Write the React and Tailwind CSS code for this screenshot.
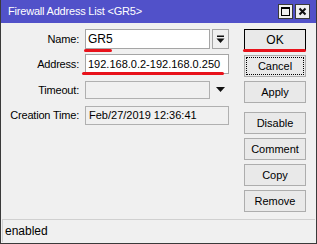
import React from 'react';

const font = { fontFamily: '"Liberation Sans", Arial, sans-serif' };

const Field = ({ label, children }) => (
  <div className="flex items-center h-[20px]">
    <div className="w-[80px] text-right pr-[2px] text-black tracking-[-0.2px]">{label}</div>
    <div className="ml-[4px] flex items-center">{children}</div>
  </div>
);

const Btn = ({ children, className = '' }) => (
  <div className={`h-[22px] w-[62px] flex items-center justify-center bg-[#e9e9e9] border border-[#adadad] text-black ${className}`}>
    {children}
  </div>
);

export default function App() {
  return (
    <div className="w-[317px] h-[244px] bg-[#f0f0f0] border-l border-r border-b border-[#3a3a3a] flex flex-col text-[11px] relative overflow-hidden" style={font}>
      {/* title bar */}
      <div className="h-[23px] bg-[#5151c9] flex items-center pl-[7px] pr-[6px]">
        <span className="text-white text-[11px] flex-1 tracking-[-0.2px]">Firewall Address List &lt;GR5&gt;</span>
        <div className="w-[15px] h-[15px] bg-[#f0f0f0] border border-[#3a3a3a] flex items-center justify-center">
          <div className="w-[9px] h-[9px] border border-black border-t-2" />
        </div>
        <div className="w-[15px] h-[15px] ml-[2px] bg-[#f0f0f0] border border-[#3a3a3a] flex items-center justify-center">
          <svg width="9" height="9" viewBox="0 0 9 9">
            <path d="M1.5 1.5 L7.5 7.5 M7.5 1.5 L1.5 7.5" stroke="#111" strokeWidth="2" />
          </svg>
        </div>
      </div>

      <div className="flex flex-1">
        {/* form */}
        <div className="flex flex-col pt-[6px] w-[243px]">
          <Field label="Name:">
            <div className="w-[125px] h-[20px] bg-white border border-[#a5a5a5] flex items-center pl-[2px] text-black text-[12px]">GR5</div>
            <div className="ml-[2px] w-[17px] h-[20px] bg-[#f0f0f0] border border-[#a5a5a5] flex items-center justify-center">
              <svg width="9" height="9" viewBox="0 0 9 9">
                <rect x="1" y="0.5" width="7" height="1.5" fill="#111" />
                <path d="M0.5 3.5 H8.5 L4.5 8 Z" fill="#111" />
              </svg>
            </div>
          </Field>
          <div className="h-[5px]" />
          <Field label="Address:">
            <div className="w-[144px] h-[20px] bg-white border border-[#a5a5a5] flex items-center pl-[2px] text-black text-[11px]">192.168.0.2-192.168.0.250</div>
          </Field>
          <div className="h-[6px]" />
          <Field label="Timeout:">
            <div className="w-[125px] h-[18px] bg-[#f0f0f0] border border-[#b0b0b0]" />
            <svg className="ml-[6px]" width="9" height="6" viewBox="0 0 9 6">
              <path d="M0 0 H9 L4.5 5 Z" fill="#111" />
            </svg>
          </Field>
          <div className="h-[5px]" />
          <Field label="Creation Time:">
            <div className="w-[144px] h-[19px] bg-[#f0f0f0] border border-[#b0b0b0] flex items-center pl-[3px] text-black">Feb/27/2019 12:36:41</div>
          </Field>
        </div>

        {/* buttons */}
        <div className="flex flex-col pt-[6px] gap-[4px]">
          <Btn className="border-black text-[12px]">OK</Btn>
          <Btn className="outline-1 outline-dotted outline-black -outline-offset-3">Cancel</Btn>
          <Btn>Apply</Btn>
          <Btn className="mt-[5px]">Disable</Btn>
          <Btn>Comment</Btn>
          <Btn>Copy</Btn>
          <Btn>Remove</Btn>
        </div>
      </div>

      {/* status bar */}
      <div className="h-[23px] mx-[1px] mb-[1px] border-t border-[#a0a0a0] border-l border-[#d0d0d0] flex items-center pl-[2px] text-black text-[12px]">
        enabled
      </div>

      {/* red annotations */}
      <div className="absolute left-[83px] top-[49px] w-[28px] h-[3px] rounded-full bg-[#e8121b]" />
      <div className="absolute left-[81px] top-[72px] w-[142px] h-[3px] rounded-full bg-[#e8121b]" />
      <div className="absolute left-[242px] top-[49px] w-[63px] h-[3px] rounded-full bg-[#e8121b]" />
    </div>
  );
}
